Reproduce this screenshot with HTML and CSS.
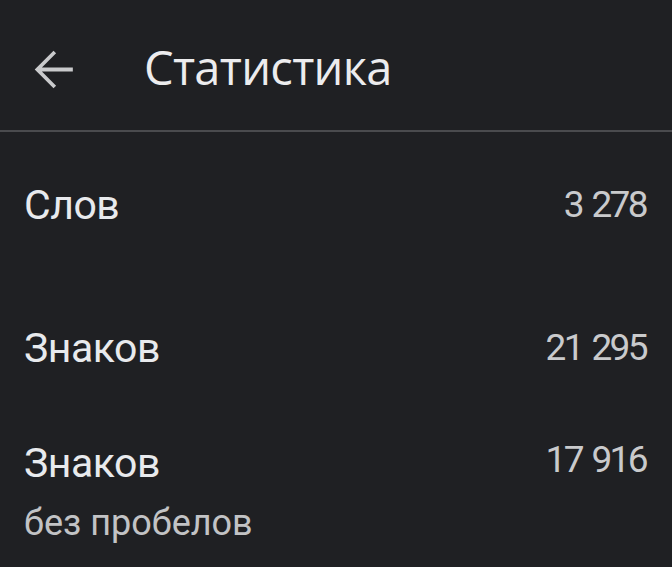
FILE: index.html
```html
<!DOCTYPE html>
<html lang="ru">
<head>
<meta charset="utf-8">
<link rel="stylesheet" href="styles.css">
</head>
<body>
<header class="bar">
  <svg class="back" viewBox="0 0 24 24" width="61" height="61"><path d="M20 11.2H7.83l5.59-5.59L12.4 4.6 5 12l7.4 7.4 1.02-1.01L7.83 12.8H20z" fill="#c9cacc"/></svg>
  <h1 class="title">Статистика</h1>
</header>
<main class="list">
  <div class="row row-first">
    <div class="label">Слов</div>
    <div class="value">3 278</div>
  </div>
  <div class="row row-second">
    <div class="label">Знаков</div>
    <div class="value">21 295</div>
  </div>
  <div class="row">
    <div class="label">Знаков<div class="sub">без пробелов</div></div>
    <div class="value">17 916</div>
  </div>
</main>
</body>
</html>
```
FILE: styles.css
```css
html, body { margin: 0; padding: 0; }
body {
  background: #1f2023;
  width: 672px;
  height: 567px;
  overflow: hidden;
  font-family: Roboto, "Liberation Sans", sans-serif;
}
.bar {
  height: 130px;
  border-bottom: 2px solid #4a4b4e;
  display: flex;
  align-items: flex-start;
  box-sizing: content-box;
}
.back {
  display: block;
  margin: 39px 0 0 22px;
}
.title {
  margin: 39px 0 0 61px;
  font-family: "Open Sans", sans-serif;
  font-weight: 400;
  font-size: 47px;
  line-height: 56px;
  letter-spacing: -0.7px;
  color: #ececee;
}
.list {
  padding: 49px 24px 0 24px;
}
.row {
  display: flex;
  justify-content: space-between;
  align-items: flex-start;
}
.row-first { height: 143px; }
.row-second { height: 115px; }
.label {
  font-size: 41px;
  line-height: 48px;
  letter-spacing: -0.5px;
  color: #e8eaed;
}
.value {
  font-size: 37px;
  line-height: 48px;
  color: #c9cacc;
  letter-spacing: -2.6px;
  word-spacing: 3px;
  margin-right: 2px;
}
.row:last-child .value { margin-top: -3px; }
.sub {
  margin-top: 16px;
  font-size: 36px;
  line-height: 40px;
  letter-spacing: 0;
  color: #c2c3c5;
}
```
